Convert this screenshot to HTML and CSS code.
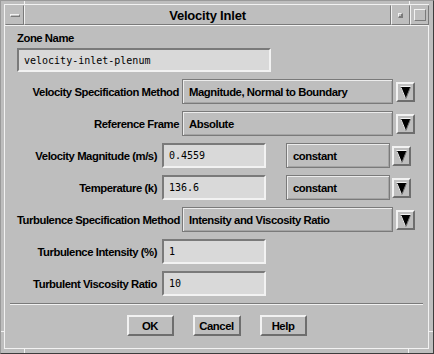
FILE: index.html
```html
<!DOCTYPE html>
<html>
<head>
<meta charset="utf-8">
<link rel="stylesheet" href="styles.css">
</head>
<body>
<div class="window">
  <span class="notch notch-tl-v"></span>
  <span class="notch notch-tr-v"></span>
  <span class="notch notch-bl-v"></span>
  <span class="notch notch-br-v"></span>
  <span class="notch notch-l-h"></span>
  <span class="notch notch-r-h"></span>
  <div class="inner">
    <div class="titlebar">
      <div class="tb-btn tb-menu"><span class="menu-bar"></span></div>
      <div class="tb-title">Velocity Inlet</div>
      <div class="tb-btn tb-min"><span class="min-sq"></span></div>
      <div class="tb-btn tb-max"><span class="max-sq"></span></div>
    </div>
    <div class="client">
      <div class="zone-label">Zone Name</div>
      <div class="field zone-field">velocity-inlet-plenum</div>
      <div class="rows">
        <div class="row">
          <div class="lbl lbl-wide">Velocity Specification Method</div>
          <div class="option option-wide">Magnitude, Normal to Boundary</div>
          <div class="arrow arrow-wide"><svg width="11" height="14" viewBox="0 0 11 14"><polygon points="0.5,1 10.5,1 5.5,13" fill="#000"/><line x1="0.5" y1="0.5" x2="10.5" y2="0.5" stroke="#f2f2f2"/><line x1="1" y1="1.5" x2="5.5" y2="12.5" stroke="#f2f2f2"/><line x1="10.2" y1="1.8" x2="6" y2="12.5" stroke="#6e6e6e"/></svg></div>
        </div>
        <div class="row">
          <div class="lbl lbl-wide">Reference Frame</div>
          <div class="option option-wide">Absolute</div>
          <div class="arrow arrow-wide"><svg width="11" height="14" viewBox="0 0 11 14"><polygon points="0.5,1 10.5,1 5.5,13" fill="#000"/><line x1="0.5" y1="0.5" x2="10.5" y2="0.5" stroke="#f2f2f2"/><line x1="1" y1="1.5" x2="5.5" y2="12.5" stroke="#f2f2f2"/><line x1="10.2" y1="1.8" x2="6" y2="12.5" stroke="#6e6e6e"/></svg></div>
        </div>
        <div class="row">
          <div class="lbl lbl-narrow">Velocity Magnitude (m/s)</div>
          <div class="field num-field">0.4559</div>
          <div class="option option-small">constant</div>
          <div class="arrow arrow-small"><svg width="11" height="14" viewBox="0 0 11 14"><polygon points="0.5,1 10.5,1 5.5,13" fill="#000"/><line x1="0.5" y1="0.5" x2="10.5" y2="0.5" stroke="#f2f2f2"/><line x1="1" y1="1.5" x2="5.5" y2="12.5" stroke="#f2f2f2"/><line x1="10.2" y1="1.8" x2="6" y2="12.5" stroke="#6e6e6e"/></svg></div>
        </div>
        <div class="row">
          <div class="lbl lbl-narrow">Temperature (k)</div>
          <div class="field num-field">136.6</div>
          <div class="option option-small">constant</div>
          <div class="arrow arrow-small"><svg width="11" height="14" viewBox="0 0 11 14"><polygon points="0.5,1 10.5,1 5.5,13" fill="#000"/><line x1="0.5" y1="0.5" x2="10.5" y2="0.5" stroke="#f2f2f2"/><line x1="1" y1="1.5" x2="5.5" y2="12.5" stroke="#f2f2f2"/><line x1="10.2" y1="1.8" x2="6" y2="12.5" stroke="#6e6e6e"/></svg></div>
        </div>
        <div class="row">
          <div class="lbl lbl-wide">Turbulence Specification Method</div>
          <div class="option option-wide">Intensity and Viscosity Ratio</div>
          <div class="arrow arrow-wide"><svg width="11" height="14" viewBox="0 0 11 14"><polygon points="0.5,1 10.5,1 5.5,13" fill="#000"/><line x1="0.5" y1="0.5" x2="10.5" y2="0.5" stroke="#f2f2f2"/><line x1="1" y1="1.5" x2="5.5" y2="12.5" stroke="#f2f2f2"/><line x1="10.2" y1="1.8" x2="6" y2="12.5" stroke="#6e6e6e"/></svg></div>
        </div>
        <div class="row">
          <div class="lbl lbl-narrow">Turbulence Intensity (%)</div>
          <div class="field num-field">1</div>
        </div>
        <div class="row">
          <div class="lbl lbl-narrow">Turbulent Viscosity Ratio</div>
          <div class="field num-field">10</div>
        </div>
      </div>
      <div class="separator"></div>
      <div class="buttons">
        <div class="btn btn-ok">OK</div>
        <div class="btn btn-cancel">Cancel</div>
        <div class="btn btn-help">Help</div>
      </div>
    </div>
  </div>
</div>
</body>
</html>
```

FILE: styles.css
```css
html, body {
  margin: 0;
  padding: 0;
  background: #bebebe;
}

.window {
  position: relative;
  width: 434px;
  height: 354px;
  box-sizing: border-box;
  background: #bebebe;
  border: 1px solid;
  border-color: #9a9a9a #3c3c3c #3c3c3c #9a9a9a;
  padding: 3px 4px 5px 3px;
  font-family: "Liberation Sans", Arial, sans-serif;
  color: #000;
}

.notch {
  position: absolute;
  background: #f2f2f2;
}
.notch-tl-v { left: 23px; top: 0; width: 1px; height: 4px; }
.notch-tr-v { left: 408px; top: 0; width: 1px; height: 4px; }
.notch-bl-v { left: 23px; bottom: 0; width: 1px; height: 5px; }
.notch-br-v { left: 407px; bottom: 0; width: 1px; height: 5px; }
.notch-l-h { left: 0; top: 330px; width: 4px; height: 1px; }
.notch-r-h { right: 0; top: 330px; width: 4px; height: 1px; }

.inner {
  height: 100%;
  display: flex;
  flex-direction: column;
  border-top: 1px solid #f2f2f2;
  border-left: 1px solid #f2f2f2;
}

.titlebar {
  display: flex;
  height: 20px;
  flex: none;
}

.tb-btn, .tb-title {
  box-sizing: border-box;
  height: 20px;
  border-top: 1px solid #bebebe;
  border-left: 1px solid #f2f2f2;
  border-right: 1px solid #7a7a7a;
  border-bottom: 1px solid #7a7a7a;
  display: flex;
  align-items: center;
  justify-content: center;
}
.tb-menu { border-left-color: #bebebe; }

.tb-btn { width: 19px; flex: none; }
.tb-title {
  flex: 1;
  font-weight: bold;
  font-size: 13px;
  letter-spacing: -0.2px;
  padding-top: 1px;
}

.menu-bar {
  width: 10px;
  height: 3px;
  box-sizing: border-box;
  border-top: 1px solid #f2f2f2;
  border-left: 1px solid #f2f2f2;
  border-right: 1px solid #7a7a7a;
  border-bottom: 1px solid #7a7a7a;
}
.min-sq {
  width: 5px;
  height: 5px;
  box-sizing: border-box;
  border-top: 1px solid #f2f2f2;
  border-left: 1px solid #f2f2f2;
  border-right: 2px solid #7a7a7a;
  border-bottom: 2px solid #7a7a7a;
}
.max-sq {
  width: 12px;
  height: 12px;
  box-sizing: border-box;
  border-top: 1px solid #f2f2f2;
  border-left: 1px solid #f2f2f2;
  border-right: 1px solid #7a7a7a;
  border-bottom: 1px solid #7a7a7a;
}

.client {
  flex: 1;
  border-top: 1px solid #f2f2f2;
  border-right: 1px solid #f2f2f2;
  border-bottom: 1px solid #f2f2f2;
  padding: 6px 0 0 12px;
  display: flex;
  flex-direction: column;
  align-items: flex-start;
}

.zone-label {
  font-weight: bold;
  font-size: 11.3px;
  letter-spacing: -0.45px;
  line-height: 13px;
}

.field {
  box-sizing: border-box;
  background: #d9d9d9;
  border-top: 2px solid #7a7a7a;
  border-left: 2px solid #7a7a7a;
  border-right: 2px solid #f2f2f2;
  border-bottom: 2px solid #f2f2f2;
  font-family: "DejaVu Sans Mono", "Liberation Mono", monospace;
  font-size: 10px;
  padding-left: 5px;
  display: flex;
  align-items: center;
}

.zone-field {
  margin-top: 3px;
  width: 254px;
  height: 24px;
}

.rows {
  margin-top: 7px;
  display: flex;
  flex-direction: column;
  gap: 7px;
}

.row {
  display: flex;
  align-items: center;
  height: 25px;
}

.lbl {
  font-weight: bold;
  font-size: 11.3px;
  letter-spacing: -0.45px;
  text-align: right;
  white-space: nowrap;
}
.lbl-wide { width: 162px; }
.lbl-narrow { width: 140px; }

.num-field {
  margin-left: 5px;
  width: 104px;
  height: 25px;
}

.option {
  box-sizing: border-box;
  height: 25px;
  border: 1px solid #7a7a7a;
  box-shadow: inset 1px 1px 0 #ececec, inset -1px -1px 0 #a4a4a4;
  font-weight: bold;
  font-size: 11.3px;
  letter-spacing: -0.45px;
  padding-left: 6px;
  display: flex;
  align-items: center;
  white-space: nowrap;
}
.option-wide { margin-left: 3px; width: 211px; }
.option-small { margin-left: 20px; width: 104px; }

.arrow {
  box-sizing: border-box;
  width: 19px;
  height: 20px;
  border-top: 2px solid #f2f2f2;
  border-left: 2px solid #f2f2f2;
  border-right: 2px solid #6e6e6e;
  border-bottom: 2px solid #6e6e6e;
  display: flex;
  align-items: flex-start;
  justify-content: center;
  padding-top: 2px;
}
.arrow svg { display: block; }
.arrow-wide { margin-left: 3px; }
.arrow-small { margin-left: 2px; }

.separator {
  align-self: stretch;
  margin: 7px 5px 0 -7px;
  height: 1px;
  background: #7a7a7a;
  border-bottom: 1px solid #f2f2f2;
}

.buttons {
  align-self: stretch;
  margin-left: -12px;
  margin-top: 10px;
  display: flex;
  justify-content: center;
  gap: 19px;
}

.btn {
  box-sizing: border-box;
  height: 21px;
  border-top: 2px solid #f2f2f2;
  border-left: 2px solid #f2f2f2;
  border-right: 2px solid #6e6e6e;
  border-bottom: 2px solid #6e6e6e;
  font-weight: bold;
  font-size: 11.3px;
  letter-spacing: -0.45px;
  display: flex;
  align-items: center;
  justify-content: center;
}
.btn-ok { width: 47px; }
.btn-cancel { width: 48px; }
.btn-help { width: 47px; }
```
